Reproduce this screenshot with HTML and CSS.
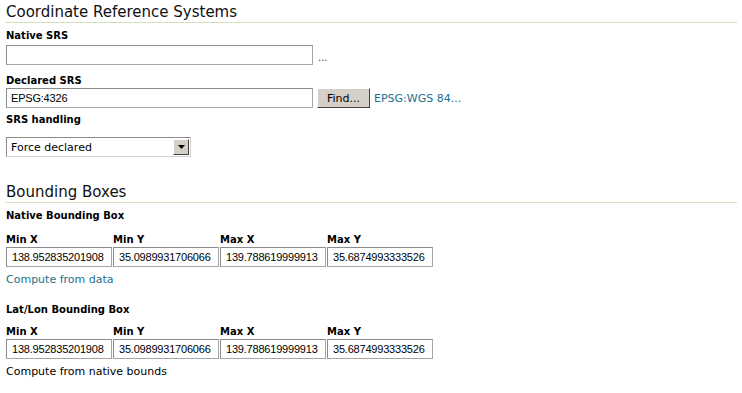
FILE: index.html
```html
<!DOCTYPE html>
<html lang="en">
<head>
    <meta charset="UTF-8">
    <title>Coordinate Reference Systems</title>
    <link rel="stylesheet" href="styles.css">
</head>
<body>
    <div class="page">
        <h2 class="section-title">Coordinate Reference Systems</h2>

        <label class="field-label label-native">Native SRS</label>
        <div class="field-row">
            <input class="text-input srs-input" type="text" value="">
            <span class="ellipsis">...</span>
        </div>

        <label class="field-label label-declared">Declared SRS</label>
        <div class="field-row">
            <input class="text-input srs-input" type="text" value="EPSG:4326">
            <button class="btn">Find...</button>
            <a href="#" class="link">EPSG:WGS 84...</a>
        </div>

        <label class="field-label label-handling">SRS handling</label>
        <div class="select-box">
            <span class="select-value">Force declared</span>
            <span class="select-arrow">
                <svg width="7" height="4" viewBox="0 0 7 4"><path d="M0 0h7L3.5 4z" fill="#000"/></svg>
            </span>
        </div>

        <h2 class="section-title title-bbox">Bounding Boxes</h2>

        <label class="field-label label-native">Native Bounding Box</label>
        <div class="bbox">
            <div class="bbox-col"><span class="bbox-label">Min X</span><input class="text-input bbox-input" type="text" value="138.952835201908"></div>
            <div class="bbox-col"><span class="bbox-label">Min Y</span><input class="text-input bbox-input" type="text" value="35.0989931706066"></div>
            <div class="bbox-col"><span class="bbox-label">Max X</span><input class="text-input bbox-input" type="text" value="139.788619999913"></div>
            <div class="bbox-col"><span class="bbox-label">Max Y</span><input class="text-input bbox-input" type="text" value="35.6874993333526"></div>
        </div>
        <a href="#" class="link compute">Compute from data</a>

        <label class="field-label label-latlon">Lat/Lon Bounding Box</label>
        <div class="bbox">
            <div class="bbox-col"><span class="bbox-label">Min X</span><input class="text-input bbox-input" type="text" value="138.952835201908"></div>
            <div class="bbox-col"><span class="bbox-label">Min Y</span><input class="text-input bbox-input" type="text" value="35.0989931706066"></div>
            <div class="bbox-col"><span class="bbox-label">Max X</span><input class="text-input bbox-input" type="text" value="139.788619999913"></div>
            <div class="bbox-col"><span class="bbox-label">Max Y</span><input class="text-input bbox-input" type="text" value="35.6874993333526"></div>
        </div>
        <span class="compute plain">Compute from native bounds</span>
    </div>
</body>
</html>
```

FILE: styles.css
```css
* {
    margin: 0;
    padding: 0;
    box-sizing: border-box;
}
body {
    font-family: "DejaVu Sans", Verdana, sans-serif;
    font-size: 11px;
    color: #000;
    background-color: #fff;
}
.page {
    padding: 0 5px 0 5px;
    width: 742px;
}
.section-title {
    font-weight: normal;
    font-size: 15px;
    color: #111;
    line-height: 20px;
    padding: 2px 0 0 1px;
    border-bottom: 1px solid #d5e0bf;
    height: 23px;
}
.title-bbox {
    margin-top: 23px;
}
.field-label {
    display: block;
    font-weight: bold;
    font-size: 10px;
    line-height: 14px;
    padding-left: 1px;
    color: #000;
}
.label-native {
    margin-top: 6px;
    margin-bottom: 2px;
}
.label-declared {
    margin-top: 9px;
}
.label-handling {
    margin-top: 5px;
    margin-bottom: 10px;
}
.label-latlon {
    margin-top: 15px;
}
.field-row {
    display: flex;
    align-items: center;
    margin-left: 1px;
}
.text-input {
    height: 20px;
    border: 1px solid #a5a5a5;
    border-top-color: #8c8c8c;
    border-left-color: #8c8c8c;
    font-family: "Liberation Sans", Arial, sans-serif;
    font-size: 11px;
    letter-spacing: -0.2px;
    color: #000;
    padding: 0 4px;
    background: #fff;
    outline: none;
}
.srs-input {
    width: 307px;
}
.ellipsis {
    margin: 4px 0 0 5px;
    font-size: 10px;
    color: #444;
}
.btn {
    height: 20px;
    width: 53px;
    margin-left: 4px;
    background: #d4d0c8;
    border: 1px solid;
    border-color: #fff #404040 #404040 #fff;
    font-family: "DejaVu Sans", Verdana, sans-serif;
    font-size: 11px;
    color: #000;
}
.link {
    color: #1e6f8e;
    text-decoration: none;
    font-size: 11px;
    margin-left: 4px;
}
.select-box {
    display: flex;
    align-items: center;
    width: 185px;
    height: 20px;
    margin-left: 1px;
    border: 1px solid #8c8c8c;
    border-right-color: #d0d0d0;
    border-bottom-color: #d0d0d0;
    padding: 1px;
}
.select-value {
    flex: 1;
    padding-left: 3px;
    font-size: 11px;
}
.select-arrow {
    width: 16px;
    height: 16px;
    background: #d4d0c8;
    border: 1px solid;
    border-color: #fff #404040 #404040 #fff;
    display: flex;
    align-items: center;
    justify-content: center;
}
.bbox {
    display: flex;
    gap: 1px;
    margin-left: 1px;
}
.bbox-col {
    display: flex;
    flex-direction: column;
}
.bbox-label {
    font-weight: bold;
    font-size: 10px;
    line-height: 14px;
    margin-top: 8px;
    color: #000;
}
.bbox-input {
    width: 106px;
    padding: 0 5px;
}
.compute {
    display: block;
    margin: 5px 0 0 1px;
    line-height: 16px;
}
.plain {
    color: #000;
}
```
